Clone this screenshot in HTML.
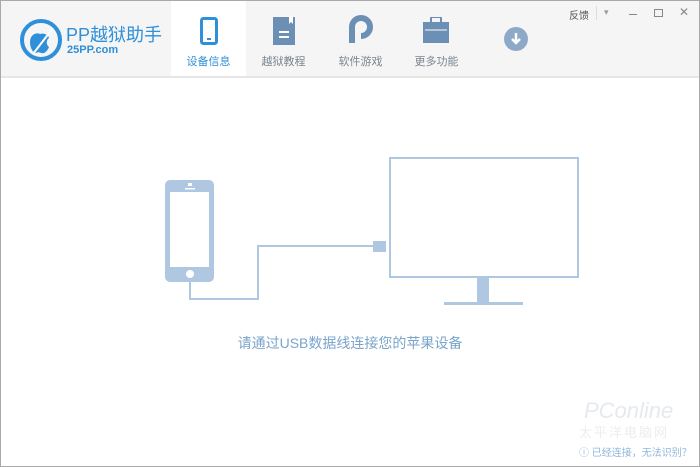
<!DOCTYPE html><html><head><meta charset="utf-8"><style>
body{margin:0;width:700px;height:467px;overflow:hidden;font-family:"Liberation Sans","Noto Sans CJK SC",sans-serif;background:#fff}
.win{position:absolute;left:0;top:0;width:698px;height:465px;border:1px solid #a9a9a9;background:#fff}
.hd{position:absolute;left:0;top:0;width:698px;height:75px;background:#f5f5f5;border-bottom:2px solid #e6e6e6}
.tab{position:absolute;top:0;width:75px;height:75px;text-align:center;font-size:11px;color:#7a8590}
.tab .lb{position:absolute;top:52px;width:100%}
.act{background:#fff;color:#2f8fd8}
</style></head><body><div class="win">
<div class="hd">
<svg style="position:absolute;left:18px;top:17px" width="44" height="44" viewBox="0 0 44 44"><circle cx="22" cy="22" r="19" fill="none" stroke="#2f8fd8" stroke-width="4"/><path d="M11 24c0-7 6-10 10-8 3-1 8 0 9 4-3 2-3 7 0 9-2 5-5 7-8 6-2-1-3-1-5 0-3 0-6-5-6-11z" fill="#2f8fd8"/><path d="M14 36L34 10" stroke="#fff" stroke-width="2"/></svg>
<div style="position:absolute;left:65px;top:20px;font-size:18px;color:#2f8fd8">PP越狱助手</div>
<div style="position:absolute;left:66px;top:43px;font-size:11px;color:#2f8fd8;font-weight:bold">25PP.com</div>
<div class="tab act" style="left:170px"><svg style="position:absolute;left:29px;top:16px" width="18" height="28"><rect x="1.5" y="1.5" width="15" height="25" rx="2" fill="none" stroke="#2f8fd8" stroke-width="3"/><rect x="7" y="21" width="4" height="2" fill="#2f8fd8"/></svg><div class="lb">设备信息</div></div>
<div class="tab" style="left:245px"><svg style="position:absolute;left:27px;top:16px" width="22" height="28"><rect width="22" height="28" fill="#6c8fb6"/><rect x="6" y="14" width="10" height="2" fill="#fff"/><rect x="6" y="19" width="10" height="2" fill="#fff"/><path d="M16 0v7l2-2 2 2V0z" fill="#fff"/></svg><div class="lb">越狱教程</div></div>
<div class="tab" style="left:322px"><svg style="position:absolute;left:25px;top:14px" width="26" height="30"><path d="M4 28V12a9 9 0 1 1 9 9" fill="none" stroke="#6c8fb6" stroke-width="6"/></svg><div class="lb">软件游戏</div></div>
<div class="tab" style="left:398px"><svg style="position:absolute;left:24px;top:16px" width="26" height="26"><rect x="8" y="0" width="10" height="6" fill="none" stroke="#6c8fb6" stroke-width="2"/><rect y="5" width="26" height="21" fill="#6c8fb6"/><path d="M2 13h22" stroke="#fff"/></svg><div class="lb">更多功能</div></div>
<svg style="position:absolute;left:503px;top:26px" width="24" height="24"><circle cx="12" cy="12" r="12" fill="#8ea9c8"/><path d="M12 6v10M8 12l4 4 4-4" stroke="#fff" stroke-width="2.5" fill="none"/></svg>
<div style="position:absolute;left:568px;top:6px;font-size:10px;color:#555">反馈</div>
<div style="position:absolute;left:595px;top:5px;width:1px;height:14px;background:#ddd"></div>
<div style="position:absolute;left:603px;top:6px;font-size:9px;color:#999">▾</div>
<div style="position:absolute;left:628px;top:13px;width:8px;height:1px;background:#888"></div>
<div style="position:absolute;left:653px;top:8px;width:7px;height:6px;border:1px solid #888"></div>
<div style="position:absolute;left:678px;top:4px;font-size:12px;color:#888">✕</div>
</div>
<svg style="position:absolute;left:0;top:0" width="698" height="465">
<g fill="#afc7e1" stroke="none">
<rect x="164" y="179" width="49" height="102" rx="5"/>
<rect x="169" y="191" width="39" height="75" fill="#fff"/>
<circle cx="189" cy="273" r="4" fill="#fff"/>
<rect x="187" y="182" width="4" height="3" fill="#fff"/><rect x="184" y="187" width="10" height="1.5" fill="#fff"/>
<rect x="372" y="240" width="13" height="11"/>
<rect x="476" y="275" width="12" height="27"/>
<rect x="443" y="301" width="79" height="3"/>
</g>
<g fill="none" stroke="#afc7e1" stroke-width="2">
<path d="M189 281V298H257V245H372"/>
<rect x="389" y="157" width="188" height="119"/>
</g>
</svg>
<div style="position:absolute;left:0;width:698px;top:332px;text-align:center;font-size:14px;color:#7aa4cc">请通过USB数据线连接您的苹果设备</div>
<div style="position:absolute;left:583px;top:397px;font-size:22px;color:#e6e9ee;font-style:italic">PConline</div>
<div style="position:absolute;left:578px;top:421px;font-size:13px;letter-spacing:2px;color:#ebedf0">太平洋电脑网</div>
<div style="position:absolute;left:578px;top:443px;font-size:10px;color:#8fb6de">ⓘ 已经连接，无法识别？</div>
</div></body></html>
